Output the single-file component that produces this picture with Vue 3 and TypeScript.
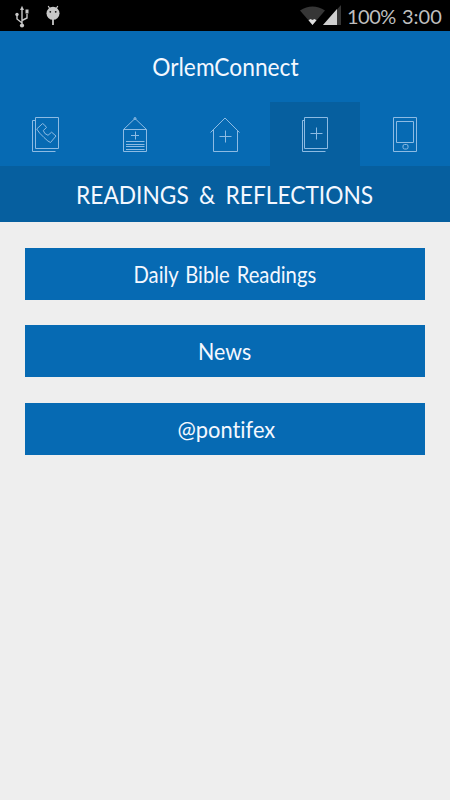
<script setup lang="ts">
import { ref } from 'vue'

interface Entry { label: string; kind: string }

const tabs: string[] = ['contacts', 'notices', 'parish', 'readings', 'device']
const active = ref<string>('readings')
const entries: Entry[] = [
  { label: 'Daily Bible Readings', kind: 'bible' },
  { label: 'News', kind: 'news' },
  { label: '@pontifex', kind: 'pontifex' },
]
</script>

<template>
  <div class="screen">
    <div class="status">
      <div class="notifications">
        <svg class="usb" width="14" height="24" viewBox="0 0 14 24" fill="none" stroke="#c8c8c8" stroke-width="1.4">
          <path d="M7 4V21M7 18L2 14V10M7 15.500L12 13V9" />
          <path d="M7 .8L9 5H5Z" fill="#c8c8c8" stroke="none" />
          <circle cx="7" cy="20.500" r="2.100" fill="#c8c8c8" stroke="none" />
          <circle cx="2" cy="9.500" r="1.700" fill="#c8c8c8" stroke="none" />
          <path d="M10.500 4.500h3v4h-3z" fill="#c8c8c8" stroke="none" />
        </svg>
        <svg class="droid" width="14" height="22" viewBox="0 0 14 22">
          <path d="M2.200 1L4 4M11.800 1L10 4" stroke="#c8c8c8" stroke-width="1.200" />
          <circle cx="7" cy="8.300" r="6.500" fill="#c8c8c8" />
          <path d="M7 14V20" stroke="#c8c8c8" stroke-width="1.800" />
          <circle cx="4.300" cy="6.800" r=".9" fill="#111" />
          <circle cx="9.700" cy="6.800" r=".9" fill="#111" />
        </svg>
      </div>
      <div class="indicators">
        <svg width="44" height="22" viewBox="0 0 44 22">
          <path d="M0 5.500Q12.500-2.500 25 5.500L12.500 20Z" fill="#363636" />
          <path d="M8.500 15.200L10.500 14L12.500 15L14.500 14L16.500 15.200L12.500 20Z" fill="#dedede" />
          <path d="M23 20L41 0V20Z" fill="#363636" />
          <path d="M23 20L37 4V20Z" fill="#cfcfcf" />
        </svg>
        <span class="battery">100%</span>
        <span class="clock">3:00</span>
      </div>
    </div>

    <header class="title"><span>OrlemConnect</span></header>

    <nav class="tabs">
      <button v-for="tab in tabs" :key="tab" class="tab" :class="{ active: active === tab }" :aria-label="tab" @click="active = tab">
        <svg width="36" height="40" viewBox="0 0 36 40" class="icon">
          <g v-if="tab === 'contacts'">
            <path d="M8.500 3.500H31.500V34.500H8.500Z" />
            <path d="M8 6.500H5.500V37.500H28.500" />
            <path d="M9.700 15L15.500 9.600Q17 9.700 19.500 13.500L16.300 16.500Q17 20 21 21.300L24.600 18.200L29 22L23.500 28.500Q21.500 28 17 23.500Q12 19 9.700 15Z" />
          </g>
          <g v-else-if="tab === 'notices'">
            <path d="M6.500 15.500H29.500V37.500H6.500ZM6.500 15.500L18 4.500L29.500 15.500" />
            <circle cx="18" cy="4.500" r="1" />
            <path d="M14 21.500H22M18.500 17.500V25.500M9 27.500H27.500M9 30.500H27.500M9 32.500H27.500M9 35.500H27.500" />
          </g>
          <g v-else-if="tab === 'parish'">
            <path d="M3.500 18.500L18 4L32.500 18.500M6.500 16V37.500H30.500V16" />
            <path d="M12.500 22.500H24.500M18.500 16.500V28.500" />
          </g>
          <g v-else-if="tab === 'readings'">
            <path d="M7.500 3.500H30.500V34.500H7.500Z" />
            <path d="M7 6.500H5.500V37.500H28.500" />
            <path d="M13.500 19.500H25.500M19.500 13.500V25.500" />
          </g>
          <g v-else>
            <path d="M6.500 3.500H29.500V37.500H6.500ZM9.500 7.500H26.500V28.500H9.500Z" />
            <rect x="16" y="30.500" width="5" height="4.500" rx="1.500" />
          </g>
        </svg>
      </button>
    </nav>

    <h1 class="section"><span>READINGS &amp; REFLECTIONS</span></h1>

    <main class="list">
      <button v-for="entry in entries" :key="entry.kind" class="entry" :class="entry.kind">
        <span>{{ entry.label }}</span>
      </button>
    </main>
  </div>
</template>

<style>
body { background: #eee; }
</style>

<style scoped>
.screen { width: 450px; height: 800px; background: #eee; color: #f4f8ff; font-family: Lato, "Open Sans", sans-serif; font-variant-ligatures: none; overflow: hidden; }
button { border: 0; padding: 0; margin: 0; font: inherit; font-variant-ligatures: none; color: inherit; }
span { display: inline-block; }
.status { height: 31px; background: #000; display: flex; justify-content: space-between; color: #bebebe; }
.notifications { display: flex; padding: 5px 0 0 15px; gap: 17px; }
.indicators { display: flex; padding: 5px 8px 0 0; font-size: 20px; line-height: 22px; white-space: nowrap; }
.battery { margin-left: 3px; width: 49px; letter-spacing: -0.5px; }
.clock { margin-left: 6px; width: 40px; }
.title { height: 71px; background: #066ab3; display: flex; align-items: center; justify-content: center; font-size: 25px; line-height: 30px; }
.title span { transform: translateY(-1px) scaleX(.91); }
.tabs { height: 64px; background: #066ab3; display: flex; }
.tab { flex: 1; background: transparent; display: flex; align-items: center; justify-content: center; }
.tab.active { background: #065f9f; }
.icon { fill: none; stroke: #8dbbe3; stroke-width: 1; }
.section { margin: 0; height: 56px; background: #065f9f; display: flex; align-items: center; justify-content: center; font-size: 25.500px; font-weight: 400; }
.section span { word-spacing: 5px; transform: scaleX(.892); }
.list { padding: 26px 25px; display: flex; flex-direction: column; gap: 25px; }
.entry { height: 52px; background: #066ab3; font-size: 23px; display: flex; align-items: center; justify-content: center; }
.entry.pontifex { margin-top: 1px; }
.bible span { word-spacing: 2px; transform: scaleX(.88); }
.news span { transform: scaleX(.93); }
.pontifex span { transform: translateX(1px) scaleX(.95); }
</style>
